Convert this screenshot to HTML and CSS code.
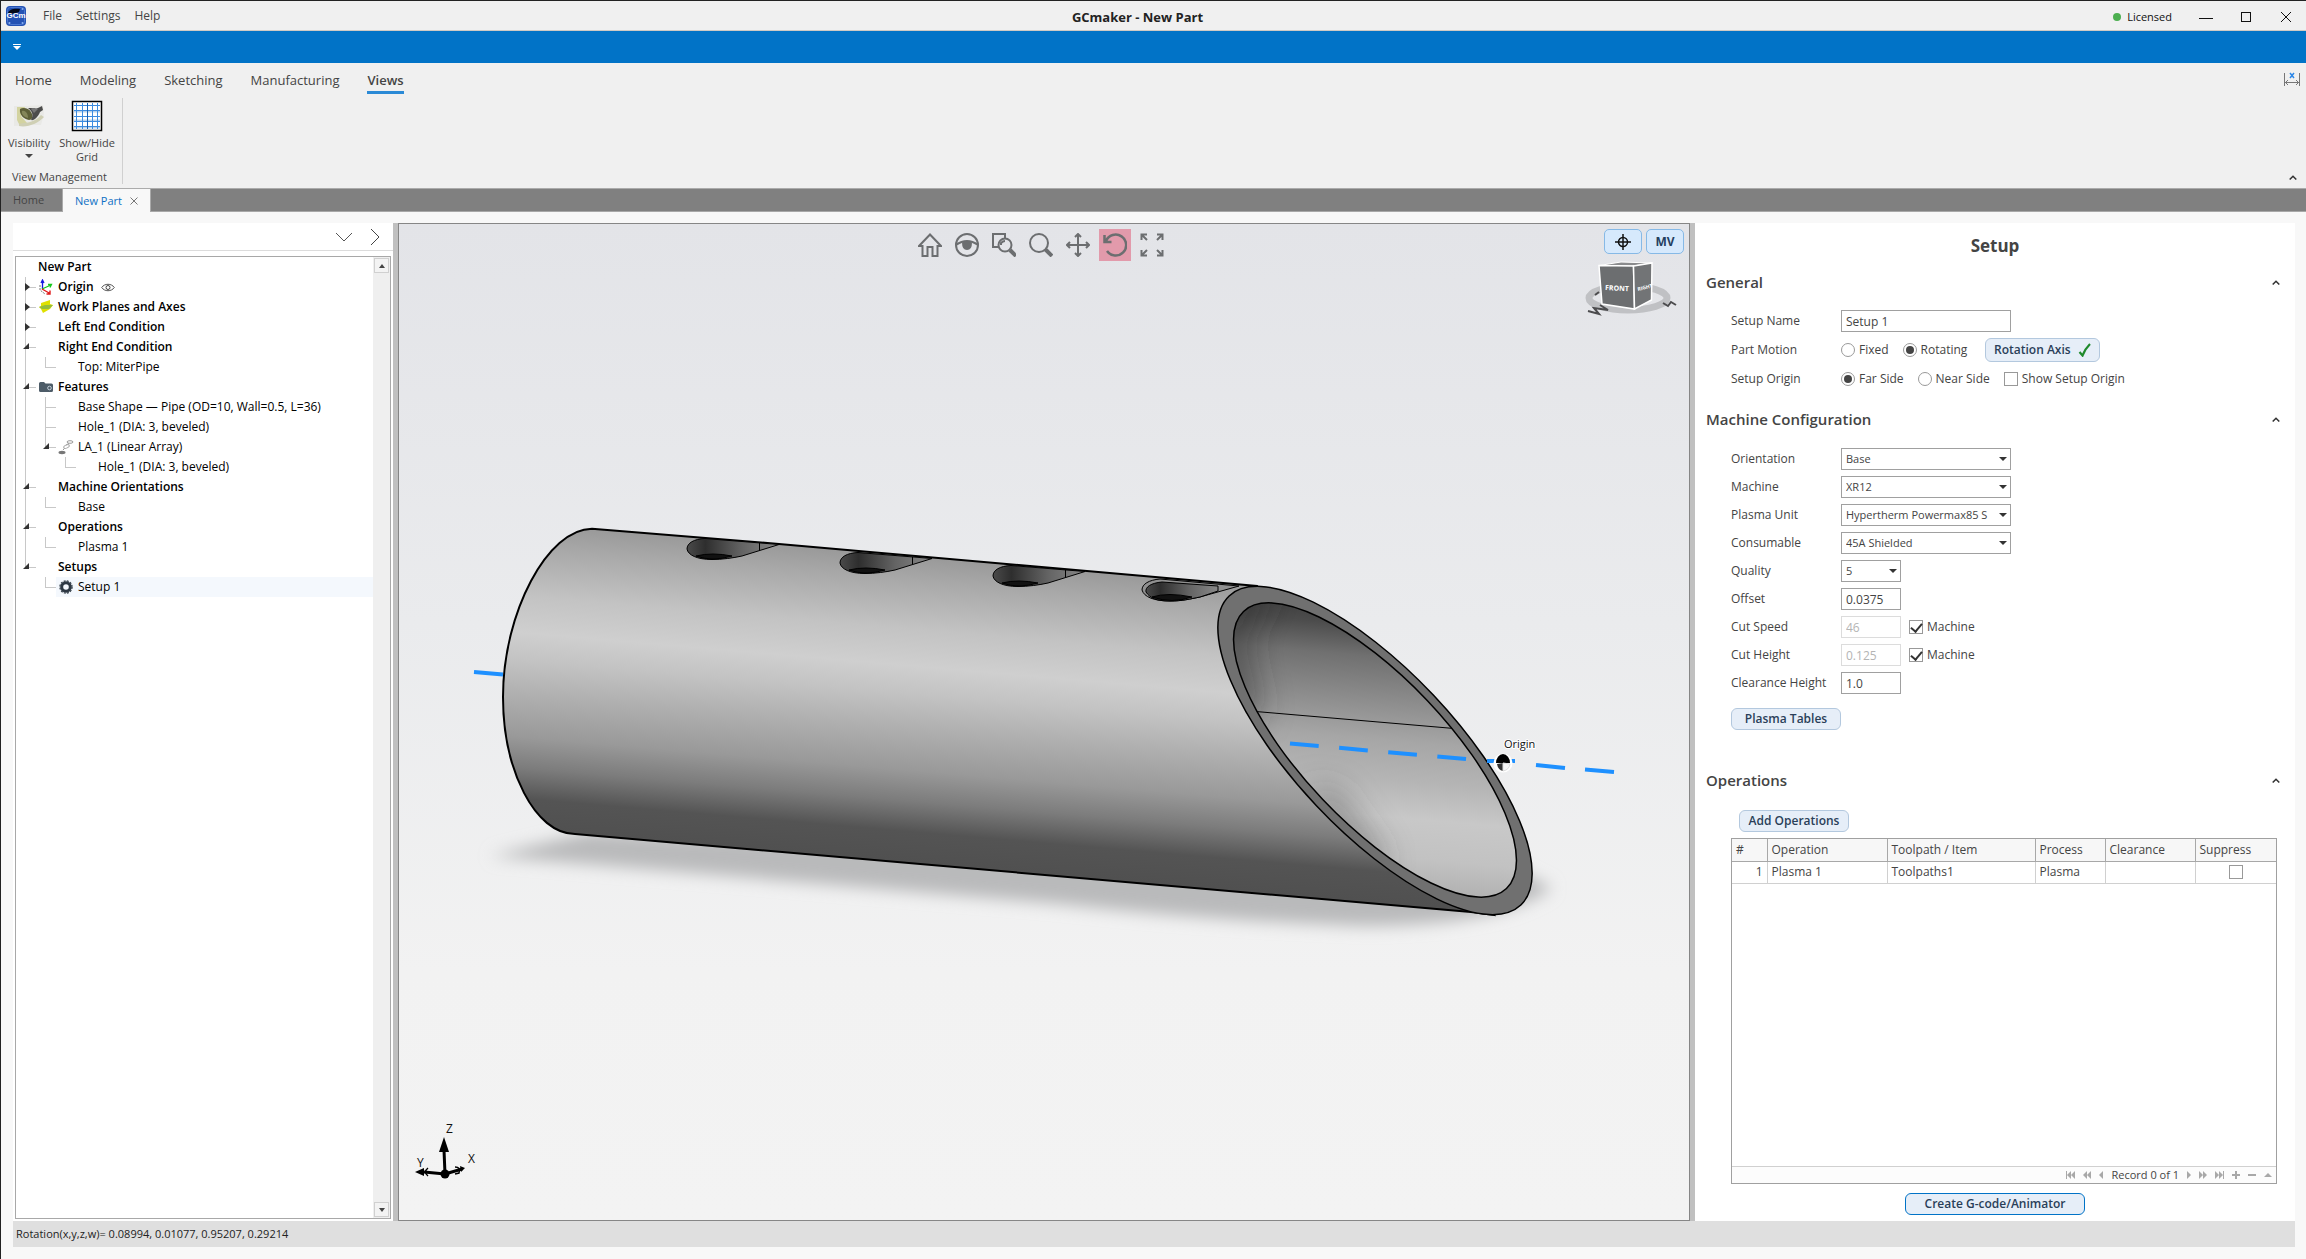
FILE: index.html
```
<!DOCTYPE html>
<html lang="en">
<head>
<meta charset="utf-8">
<title>GCmaker - New Part</title>
<link rel="stylesheet" href="styles.css">
</head>
<body>
<div class="window">
  <header class="titlebar">
    <div class="title-left">
      <svg class="app-logo" width="20" height="20" viewBox="0 0 20 20"><rect width="20" height="20" rx="4" fill="#2452b4"/><rect x="1.500" y="1.500" width="17" height="17" rx="3" fill="none" stroke="#4c78d0"/><path d="M2 7C3 3 9 2 14 3L13 6L10 7L4 8Z" fill="#050a18"/><circle cx="3.500" cy="17" r="1" fill="#8ab0f0"/><circle cx="16.500" cy="17" r="1" fill="#8ab0f0"/><circle cx="16.500" cy="3" r="1" fill="#8ab0f0"/><text x="10" y="12" text-anchor="middle" class="logo-text">GCm</text></svg>
      <nav class="menu"><button>File</button><button>Settings</button><button>Help</button></nav>
    </div>
    <h1 class="app-title">GCmaker - New Part</h1>
    <div class="title-right">
      <span class="license"><i class="dot"></i>Licensed</span>
      <button class="win-btn" aria-label="Minimize"><svg width="14" height="14" viewBox="0 0 14 14"><path d="M0 8.500H14" stroke="#111"/></svg></button>
      <button class="win-btn" aria-label="Maximize"><svg width="14" height="14" viewBox="0 0 14 14"><rect x="2.500" y="2.500" width="9" height="9" fill="none" stroke="#111"/></svg></button>
      <button class="win-btn" aria-label="Close"><svg width="14" height="14" viewBox="0 0 14 14"><path d="M2 2L12 12M12 2L2 12" stroke="#111"/></svg></button>
    </div>
  </header>
  <div class="quickbar"><button aria-label="Customize toolbar"><svg width="8" height="6" viewBox="0 0 8 6"><path d="M0 0H8V1H0ZM0 2H8L4 6Z" fill="#fff"/></svg></button></div>
  <section class="ribbon">
    <nav class="ribbon-tabs">
      <button>Home</button><button>Modeling</button><button>Sketching</button><button>Manufacturing</button><button class="active">Views</button>
      <span class="spacer"></span>
      <svg class="measure" width="16" height="14" viewBox="0 0 16 14"><path d="M.5 1V14M15.500 1V14M1 10.500H15M4 8L1.500 10.500L4 13M12 8L14.500 10.500L12 13" fill="none" stroke="#777"/><path d="M6 1L10 6M10 1L6 6" stroke="#2a86e8" stroke-width="1.500"/></svg>
    </nav>
    <div class="ribbon-body">
      <div class="group">
        <div class="group-items">
          <button class="tool tool-vis"><svg width="32" height="32" viewBox="0 0 32 32"><path d="M1 6H14L30 5L31 14L28 25L16 25L1 26Z" fill="#e9e9e6"/><path d="M4 7H12L8 16L14 23L7 26L4 20Z" fill="#d3d3a0"/><path d="M6 24C12 22 20 24 28 15L31 17C26 23 14 28 6 26Z" fill="#cfcfb4"/><path d="M7 9C10 7 16 8 18 12C21 17 19 20 16 20C11 19 6 15 7 9Z" fill="#5d5f38"/><path d="M9 11C12 10 15 13 15 18C11 17 8 14 9 11Z" fill="#84865a"/><path d="M15 8C20 8 24 9 25 8L29 6L30 10L27 12C25 17 21 21 18 20C21 15 19 11 15 8Z" fill="#4c4c4c"/><path d="M18 9L25 9L21 13Z" fill="#777"/></svg><span>Visibility</span><svg width="8" height="5" viewBox="0 0 8 5"><path d="M0 0H8L4 4Z" fill="#444"/></svg></button>
          <button class="tool tool-grid"><svg width="32" height="32" viewBox="0 0 32 32"><rect x="1.500" y="1.500" width="29" height="29" fill="#fff" stroke="#000" stroke-width="1.500"/><path d="M3 11.500H29M3 27.500H29M3 20.500H29" stroke="#b9d3ec" stroke-width="2"/><path d="M5.500 3V29M11.500 3V29M21.500 3V29M26.500 3V29M3 5.500H29M3 10.500H29M3 16.500H29M3 21.500H29M3 26.500H29" stroke="#3d8ce0"/><path d="M16.500 3V29" stroke="#1760b4"/></svg><span>Show/Hide<br>Grid</span></button>
        </div>
        <div class="group-name">View Management</div>
      </div>
      <button class="collapse" aria-label="Collapse ribbon"><svg width="8" height="5" viewBox="0 0 8 5"><path d="M.7 4.500L4 1.200L7.300 4.500" fill="none" stroke="#333" stroke-width="1.500"/></svg></button>
    </div>
  </section>
  <nav class="doc-tabs"><button class="doc">Home</button><button class="doc current">New Part<svg width="8" height="8" viewBox="0 0 8 8"><path d="M.5.5L7.500 7.500M7.500.5L.5 7.500" stroke="#777"/></svg></button></nav>

  <main class="work">
    <aside class="explorer">
      <div class="explorer-head">
        <button aria-label="Expand"><svg width="18" height="10" viewBox="0 0 18 10"><path d="M1 1L9 9L17 1" fill="none" stroke="#555"/></svg></button>
        <button aria-label="Next"><svg width="10" height="18" viewBox="0 0 10 18"><path d="M1 1L9 9L1 17" fill="none" stroke="#444"/></svg></button>
      </div>
      <div class="tree-box">
        <ul class="tree">
          <li class="b"><i class="g"></i><span>New Part</span></li>
          <li class="b"><i class="g v h shut"></i><i class="slot"><svg width="16" height="16" viewBox="0 0 16 16"><path d="M4.500 10V2M3 4L4.500 1L6 4" fill="none" stroke="#1818e0" stroke-width="1.300"/><path d="M4 10L13 6M10 5.500L13.500 5.500L12 8.500" fill="none" stroke="#16c81c" stroke-width="1.300"/><path d="M4 10L12 14.500M12 11.500V15H8.500" fill="none" stroke="#e01818" stroke-width="1.400"/><path d="M2 6V11L7 15" fill="none" stroke="#777" stroke-dasharray="2 1"/></svg></i><span>Origin</span><svg class="eye" width="14" height="9" viewBox="0 0 14 9"><path d="M.7 4.500C3.500.2 10.500.2 13.300 4.500C10.500 8.800 3.500 8.800.7 4.500Z" fill="none" stroke="#555"/><circle cx="7" cy="4.500" r="2" fill="none" stroke="#444"/></svg></li>
          <li class="b"><i class="g v h shut"></i><i class="slot"><svg width="16" height="14" viewBox="0 0 16 14"><path d="M3 3L12 0V4L15 5L12 9L5 13L3 9L1 7L3 6Z" fill="#dfe000"/><path d="M1 7L7 5L15 5L11 9L4 9Z" fill="#94bd3c"/></svg></i><span>Work Planes and Axes</span></li>
          <li class="b"><i class="g v h shut"></i><i class="slot"></i><span>Left End Condition</span></li>
          <li class="b"><i class="g v h open"></i><i class="slot"></i><span>Right End Condition</span></li>
          <li><i class="g v"></i><i class="g end h"></i><i class="slot"></i><span>Top: MiterPipe</span></li>
          <li class="b"><i class="g v h open"></i><i class="slot"><svg width="16" height="12" viewBox="0 0 16 12"><path d="M1 2.500Q1 1 2.500 1H6L7.500 2.500H13.500Q15 2.500 15 4V9.500Q15 11 13.500 11H2.500Q1 11 1 9.500Z" fill="#4d5c68"/><circle cx="11.500" cy="7" r="1.800" fill="#4d5c68" stroke="#c5d0da"/></svg></i><span>Features</span></li>
          <li><i class="g v"></i><i class="g v h"></i><i class="slot"></i><span>Base Shape — Pipe (OD=10, Wall=0.5, L=36)</span></li>
          <li><i class="g v"></i><i class="g v h"></i><i class="slot"></i><span>Hole_1 (DIA: 3, beveled)</span></li>
          <li><i class="g v"></i><i class="g end h open"></i><i class="slot"><svg width="16" height="16" viewBox="0 0 16 16"><ellipse cx="12" cy="3" rx="3" ry="1.300" fill="none" stroke="#999"/><path d="M11 4.500L8 6M7 9L5 11" stroke="#999"/><ellipse cx="8.500" cy="7.500" rx="3" ry="1.500" fill="none" stroke="#aaa" transform="rotate(-25 8.500 7.500)"/><ellipse cx="4" cy="13.500" rx="3.500" ry="1.700" fill="#777"/></svg></i><span>LA_1 (Linear Array)</span></li>
          <li><i class="g v"></i><i class="g"></i><i class="g end h"></i><i class="slot"></i><span>Hole_1 (DIA: 3, beveled)</span></li>
          <li class="b"><i class="g v h open"></i><i class="slot"></i><span>Machine Orientations</span></li>
          <li><i class="g v"></i><i class="g end h"></i><i class="slot"></i><span>Base</span></li>
          <li class="b"><i class="g v h open"></i><i class="slot"></i><span>Operations</span></li>
          <li><i class="g v"></i><i class="g end h"></i><i class="slot"></i><span>Plasma 1</span></li>
          <li class="b"><i class="g end h open"></i><i class="slot"></i><span>Setups</span></li>
          <li><i class="g"></i><i class="g end h"></i><div class="picked"><i class="slot"><svg width="14" height="14" viewBox="0 0 14 14"><circle cx="7" cy="7" r="4.300" fill="none" stroke="#2d3843" stroke-width="3"/><circle cx="7" cy="7" r="6.100" fill="none" stroke="#2d3843" stroke-width="1.200" stroke-dasharray="2 1.200"/></svg></i><span>Setup 1</span></div></li>
        </ul>
        <div class="scroll"><button aria-label="Scroll up"><svg width="6" height="4" viewBox="0 0 6 4"><path d="M0 4L3 0L6 4Z" fill="#444"/></svg></button><button aria-label="Scroll down"><svg width="6" height="4" viewBox="0 0 6 4"><path d="M0 0L3 4L6 0Z" fill="#444"/></svg></button></div>
      </div>
    </aside>
    <div class="splitter"></div>

    <section class="viewport">
      <svg class="scene" viewBox="399 224 1290 996">
        <defs>
          <linearGradient id="body" gradientUnits="userSpaceOnUse" x1="592" y1="528" x2="566" y2="833">
            <stop offset="0" stop-color="#999"/><stop offset=".08" stop-color="#a8a8a8"/><stop offset=".24" stop-color="#c3c3c3"/><stop offset=".36" stop-color="#cfcfcf"/><stop offset=".45" stop-color="#c3c3c3"/><stop offset=".56" stop-color="#b0b0b0"/><stop offset=".7" stop-color="#999"/><stop offset=".8" stop-color="#7c7c7c"/><stop offset=".9" stop-color="#545454"/><stop offset="1" stop-color="#505050"/>
          </linearGradient>
          <linearGradient id="bore" gradientUnits="userSpaceOnUse" x1="1385" y1="596" x2="1359" y2="900">
            <stop offset="0" stop-color="#383838"/><stop offset=".1" stop-color="#4c4c4c"/><stop offset=".2" stop-color="#707070"/><stop offset=".35" stop-color="#8e8e8e"/><stop offset=".47" stop-color="#a6a6a6"/><stop offset=".6" stop-color="#b5b5b5"/><stop offset=".72" stop-color="#c8c8c8"/><stop offset=".85" stop-color="#c2c2c2"/><stop offset="1" stop-color="#ababab"/>
          </linearGradient>
          <linearGradient id="hole" x1="0" x2="1" y1="0" y2="0"><stop offset="0" stop-color="#4a4a4a"/><stop offset=".2" stop-color="#2e2e2e"/><stop offset=".6" stop-color="#646464"/><stop offset="1" stop-color="#888"/></linearGradient>
          <filter id="soft" x="-10%" y="-40%" width="120%" height="180%"><feGaussianBlur stdDeviation="8"/></filter>
          <filter id="shade" x="-50%" y="-50%" width="200%" height="200%"><feGaussianBlur stdDeviation="16"/></filter>
          <clipPath id="boreclip"><ellipse cx="1375" cy="750" rx="191" ry="72" transform="rotate(46.500 1375 750)"/></clipPath>
        </defs>
        <path d="M490 856L590 832L1500 862L1552 888Q1500 926 1360 926Q1200 920 1060 904Z" fill="#b9babb" filter="url(#soft)"/>
        <path d="M474 672L503 674.500" stroke="#1e90ff" stroke-width="4"/>
        <path d="M592 528.700C548 528.700 503 612 503 697C503 770 535 834 575 834L1471 912L1494 915L1375 750L1257 586L779 544Z" fill="url(#body)" stroke="#000" stroke-width="2"/>
        <g stroke="#000" stroke-width="1">
          <g id="port"><path d="M705 538.500C694 539 687 543 687 549C688 555 697 559.500 712 559.500C722 559.500 733 558 742 556L779 544.500Z" fill="url(#hole)"/><path d="M759.500 543V550.500" fill="none"/><path d="M696 556Q712 552 732 556Q712 562 696 556Z" fill="#111"/></g>
          <use href="#port" x="153" y="14"/>
          <use href="#port" x="306" y="27"/>
          <path d="M1160 579C1149 580 1142 584 1142 590C1144 597 1154 601 1170 601C1182 601 1190 599 1200 597L1239 586Z" fill="#909090"/>
          <path d="M1162 582C1151 583 1145 587 1146 592C1150 598 1156 601 1170 601C1182 601 1190 599 1200 597L1218 591V586Z" fill="url(#hole)"/>
          <path d="M1152 597Q1168 592 1192 597Q1172 604 1152 597Z" fill="#111"/>
        </g>
        <ellipse cx="1375" cy="750.500" rx="212.500" ry="80.500" transform="rotate(46.660 1375 750.500)" fill="#707070" stroke="#000" stroke-width="1.500"/>
        <g clip-path="url(#boreclip)">
          <rect x="1220" y="590" width="310" height="320" fill="url(#bore)"/>
          <path d="M1215 580H1275L1245 640L1262 715L1225 720Z" fill="#333" fill-opacity=".6" filter="url(#shade)"/>
          <path d="M1300 790L1335 790L1385 860L1370 880Z" fill="#444" fill-opacity=".5" filter="url(#shade)"/>
          <path d="M1250 711L1460 729" stroke="#000"/>
        </g>
        <ellipse cx="1375" cy="750" rx="191" ry="72" transform="rotate(46.500 1375 750)" fill="none" stroke="#000" stroke-width="1.500"/>
        <path d="M1290 743.500L1467 759.200" stroke="#1e90ff" stroke-width="4" stroke-dasharray="28.800 20.500"/>
        <path d="M1487 761H1515M1536 765L1565 768M1585 769.500L1614 772" stroke="#1e90ff" stroke-width="4"/>
        <circle cx="1503" cy="763" r="9.500" fill="#fff"/><path d="M1496 763A7 9 0 0 1 1510 763Z" fill="#000"/><path d="M1497 764Q1498 770 1503 771V763Z" fill="#333"/><path d="M1503 763V771Q1509 770 1510 764Z" fill="#f6f6f6" stroke="#ddd"/>
        <text x="1504" y="748" class="scene-text halo">Origin</text>
        <g stroke="#000" stroke-width="3"><path d="M445 1174L444 1150M445 1174L424 1172M445 1174L462 1169"/></g>
        <path d="M444 1137L449 1152H439ZM415 1172L424 1168V1176ZM465 1168L460 1166L461 1172Z"/><circle cx="445" cy="1174" r="4.500"/>
        <path d="M428 1168Q423 1172 428 1176M455 1167Q461 1167 459 1173L455 1174" fill="none" stroke="#000" stroke-width="1.500"/>
        <text x="446" y="1133" class="scene-text">Z</text><text x="417" y="1167" class="scene-text">Y</text><text x="468" y="1163" class="scene-text">X</text>
      </svg>
      <div class="view-tools">
        <button aria-label="Home view"><svg viewBox="0 0 24 24"><path d="M1 13L12 1.500L23 13H19.500V23H14.500V14H9.500V23H4.500V13Z"/></svg></button>
        <button aria-label="Look"><svg viewBox="0 0 24 24"><circle cx="12" cy="12" r="11"/><path d="M1 12Q12 4 23 12" /><path d="M7 9.500Q12 6.500 17 9.500Q17 17 12 17Q7 17 7 9.500Z" class="solid"/></svg></button>
        <button aria-label="Zoom window"><svg viewBox="0 0 24 24"><path d="M13 5V1H1V14H6"/><circle cx="13" cy="12" r="6.500"/><path d="M18 17L24 23" class="thick"/><path d="M9 12V10Q11 8 13 8"/></svg></button>
        <button aria-label="Zoom"><svg viewBox="0 0 24 24"><circle cx="10" cy="10" r="9"/><path d="M16.500 16.500L23 23" class="thick"/></svg></button>
        <button aria-label="Pan"><svg viewBox="0 0 24 24"><path d="M12 1V23M1 12H23M9 4L12 1L15 4M9 20L12 23L15 20M4 9L1 12L4 15M20 9L23 12L20 15"/></svg></button>
        <button aria-label="Rotate" class="on"><svg viewBox="0 0 24 24"><path d="M3 8A10.500 10.500 0 1 1 4 18M1.500 2V9H8.500" stroke-width="2.500"/></svg></button>
        <button aria-label="Fit"><svg viewBox="0 0 24 24"><path d="M1.500 7V1.500H7M2 2L7 7M17 1.500H22.500V7M22 2L17 7M1.500 17V22.500H7M2 22L7 17M17 22.500H22.500V17M22 22L17 17"/></svg></button>
      </div>
      <div class="corner">
        <div class="corner-btns">
          <button aria-label="Target"><svg width="16" height="16" viewBox="0 0 16 16"><circle cx="8" cy="8" r="4.500" fill="none" stroke="#111" stroke-width="1.500"/><path d="M8 0V16M0 8H16" stroke="#111" stroke-width="1.500"/></svg></button>
          <button>MV</button>
        </div>
        <svg class="cube" width="100" height="62" viewBox="1586 260 100 62"><ellipse cx="1631" cy="298" rx="39" ry="12" fill="none" stroke="#c0c1c4" stroke-width="7"/><path d="M1602 265.500L1624 262L1655 263L1636.500 266Z" fill="#8a8b8d" stroke="#fff"/><path d="M1602 265.500L1636.500 266L1637.500 309L1605 304Z" fill="#6c6e70" stroke="#fff" stroke-width="1.500"/><path d="M1636.500 266L1655 263L1654.500 300L1637.500 309Z" fill="#727476" stroke="#fff" stroke-width="1.500"/><text x="1608" y="290" class="cube-text" transform="rotate(3 1608 290)">FRONT</text><text x="1641" y="291" class="cube-text small" transform="rotate(-14 1641 291)">RIGHT</text><path d="M1591 311L1602 314L1597 308L1611 310L1603 305M1666 303L1671 306L1674 302L1679 305" fill="none" stroke="#4c4c4e" stroke-width="2"/><path d="M1598 295L1602 292" stroke="#4c4c4e" stroke-width="2"/></svg>
      </div>
    </section>
    <div class="splitter"></div>

    <aside class="setup">
      <h2>Setup</h2>
      <section class="first">
        <h3>General<svg width="8" height="5" viewBox="0 0 8 5"><path d="M.7 4.500L4 1.200L7.300 4.500" fill="none" stroke="#333" stroke-width="1.500"/></svg></h3>
        <div class="form general">
          <label class="name" for="sname">Setup Name</label><div class="cell"><input id="sname" class="text wide" type="text" value="Setup 1"></div>
          <span class="name">Part Motion</span><div class="cell opts"><label><input type="radio" name="motion">Fixed</label><label><input type="radio" name="motion" checked>Rotating</label><button class="btn axis">Rotation Axis<svg width="14" height="14" viewBox="0 0 14 14"><path d="M1.500 9L4.500 12.500Q7 6 12 1" fill="none" stroke="#1f8a2c" stroke-width="2.200"/></svg></button></div>
          <span class="name">Setup Origin</span><div class="cell opts"><label><input type="radio" name="origin" checked>Far Side</label><label><input type="radio" name="origin">Near Side</label><label><input type="checkbox">Show Setup Origin</label></div>
        </div>
      </section>
      <section>
        <h3>Machine Configuration<svg width="8" height="5" viewBox="0 0 8 5"><path d="M.7 4.500L4 1.200L7.300 4.500" fill="none" stroke="#333" stroke-width="1.500"/></svg></h3>
        <div class="form machine">
          <label class="name" for="ori">Orientation</label><div class="cell"><div class="pick wide"><select id="ori"><option>Base</option></select></div></div>
          <label class="name" for="mac">Machine</label><div class="cell"><div class="pick wide"><select id="mac"><option>XR12</option></select></div></div>
          <label class="name" for="unit">Plasma Unit</label><div class="cell"><div class="pick wide"><select id="unit"><option>Hypertherm Powermax85 S</option></select></div></div>
          <label class="name" for="con">Consumable</label><div class="cell"><div class="pick wide"><select id="con"><option>45A Shielded</option></select></div></div>
          <label class="name" for="qua">Quality</label><div class="cell"><div class="pick"><select id="qua"><option>5</option></select></div></div>
          <label class="name" for="off">Offset</label><div class="cell"><input id="off" class="text" type="text" value="0.0375"></div>
          <label class="name" for="spd">Cut Speed</label><div class="cell"><input id="spd" class="text" type="text" value="46" disabled><label><input type="checkbox" checked>Machine</label></div>
          <label class="name" for="hgt">Cut Height</label><div class="cell"><input id="hgt" class="text" type="text" value="0.125" disabled><label><input type="checkbox" checked>Machine</label></div>
          <label class="name" for="clr">Clearance Height</label><div class="cell"><input id="clr" class="text" type="text" value="1.0"></div>
        </div>
        <button class="btn tables">Plasma Tables</button>
      </section>
      <section class="ops">
        <h3>Operations<svg width="8" height="5" viewBox="0 0 8 5"><path d="M.7 4.500L4 1.200L7.300 4.500" fill="none" stroke="#333" stroke-width="1.500"/></svg></h3>
        <button class="btn add">Add Operations</button>
        <div class="grid-box">
          <table>
            <colgroup><col class="c1"><col class="c2"><col class="c3"><col class="c4"><col class="c5"><col></colgroup>
            <thead><tr><th>#</th><th>Operation</th><th>Toolpath / Item</th><th>Process</th><th>Clearance</th><th>Suppress</th></tr></thead>
            <tbody><tr><td class="num">1</td><td>Plasma 1</td><td>Toolpaths1</td><td>Plasma</td><td></td><td class="mid"><input type="checkbox" aria-label="Suppress"></td></tr></tbody>
          </table>
          <div class="pager">
            <svg width="9" height="8" viewBox="0 0 9 8"><path d="M0 0H1V8H0ZM5 0V8L1 4ZM9 0V8L5 4Z"/></svg>
            <svg width="8" height="8" viewBox="0 0 8 8"><path d="M4 0V8L0 4ZM8 0V8L4 4Z"/></svg>
            <svg width="4" height="8" viewBox="0 0 4 8"><path d="M4 0V8L0 4Z"/></svg>
            <span>Record 0 of 1</span>
            <svg width="4" height="8" viewBox="0 0 4 8"><path d="M0 0V8L4 4Z"/></svg>
            <svg width="8" height="8" viewBox="0 0 8 8"><path d="M0 0V8L4 4ZM4 0V8L8 4Z"/></svg>
            <svg width="9" height="8" viewBox="0 0 9 8"><path d="M8 0H9V8H8ZM0 0V8L4 4ZM4 0V8L8 4Z"/></svg>
            <svg width="8" height="8" viewBox="0 0 8 8"><path d="M3 0H5V3H8V5H5V8H3V5H0V3H3Z"/></svg>
            <svg width="8" height="8" viewBox="0 0 8 8"><path d="M0 3H8V5H0Z"/></svg>
            <svg width="8" height="8" viewBox="0 0 8 8"><path d="M0 6L4 2L8 6Z"/></svg>
          </div>
        </div>
        <button class="btn create">Create G-code/Animator</button>
      </section>
    </aside>
  </main>
  <footer class="status">Rotation(x,y,z,w)= 0.08994, 0.01077, 0.95207, 0.29214</footer>
</div>
</body>
</html>
```
FILE: styles.css
```
* { box-sizing: border-box; }
body { margin: 0; background: #f8f8f8; color: #444; font: 12px/16px "Open Sans", "Noto Sans", sans-serif; }
button, input, select { font: inherit; color: inherit; }
button { background: none; border: 0; padding: 0; }
h1, h2, h3, ul { margin: 0; padding: 0; font-weight: 600; }
svg { display: block; flex: none; }

.window { display: flex; flex-direction: column; min-height: 100vh; border: solid #222; border-width: 1px 0 0 1px; }

.titlebar { display: grid; grid-template-columns: 1fr auto 1fr; align-items: center; height: 30px; background: #f0f0f0; border-bottom: 1px solid #cfcac5; }
.title-left, .title-right, .menu { display: flex; align-items: center; }
.title-left { padding-left: 5px; gap: 17px; }
.logo-text { font: bold 8px "Liberation Sans", sans-serif; fill: #fff; }
.menu { gap: 14px; }
.app-title { font-size: 13px; line-height: 20px; color: #222; font-weight: 700; padding: 2px 32px 0 0; }
.title-right { justify-content: flex-end; }
.license { display: flex; align-items: center; gap: 6px; margin-right: 14px; padding-top: 2px; font-size: 11px; color: #111; }
.dot { width: 8px; height: 8px; border-radius: 50%; background: #4caf50; }
.win-btn { width: 40px; height: 28px; padding-top: 2px; display: grid; place-items: center; }

.quickbar { height: 32px; background: #0173c7; display: flex; align-items: center; padding-left: 12px; }

.ribbon { background: #f0f0f0; border-bottom: 1px solid #ababab; }
.ribbon-tabs { display: flex; height: 31px; padding: 2px 6px 0 14px; gap: 28px; align-items: flex-start; font-size: 13px; }
.ribbon-tabs button { height: 29px; padding-top: 3px; border-bottom: 3px solid transparent; }
.ribbon-tabs .active { font-weight: 600; border-color: #2b8ad6; }
.spacer { flex: 1; }
.measure { margin-top: 7px; }
.ribbon-body { display: flex; justify-content: space-between; align-items: flex-end; height: 94px; padding: 4px 6px 4px 3px; }
.group { height: 86px; border-right: 1px solid #d0d0d0; width: 119px; display: flex; flex-direction: column; justify-content: space-between; }
.group-items { display: flex; gap: 3px; padding-top: 2px; }
.tool { display: flex; flex-direction: column; align-items: center; line-height: 14px; gap: 4px; font-size: 11px; }
.tool-vis { width: 50px; }
.tool-grid { width: 60px; }
.group-name { padding: 0 8px; font-size: 11px; line-height: 14px; }
.collapse { padding: 4px 3px 4px; }

.doc-tabs { display: flex; height: 23px; background: #808080; border-bottom: 1px solid #a8a8a8; }
.doc { width: 62px; padding-left: 12px; text-align: left; color: #444; border-right: 1px solid #aaa; height: 22px; font-size: 11px; }
.doc.current { width: 88px; height: 23px; background: #f8f8f8; color: #0f70c4; display: flex; align-items: center; gap: 8px; }

.work { flex: 1; display: flex; margin: 11px 11px 0 12px; min-height: 990px; }
.explorer { width: 380px; background: #fff; display: flex; flex-direction: column; padding: 0 2px 2px; }
.explorer-head { display: flex; justify-content: flex-end; align-items: center; gap: 17px; height: 28px; margin: 0 -2px 5px; padding-right: 13px; border-bottom: 1px solid #dcdcdc; }
.tree-box { flex: 1; display: flex; border: 1px solid #a8a8a8; }
.tree { flex: 1; list-style: none; color: #000; font-weight: 400; }
.tree li { display: flex; align-items: center; height: 20px; white-space: nowrap; }
.tree span { padding-left: 2px; }
.tree .b { font-weight: 600; }
.g { position: relative; width: 20px; height: 20px; flex: none; }
.g.v::before, .g.end::before { content: ""; position: absolute; left: 9px; top: 0; bottom: 0; border-left: 1px solid #c8c8c8; }
.g.end::before { bottom: 10px; }
.g.h { background: linear-gradient(#c8c8c8, #c8c8c8) 9px 10px / 11px 1px no-repeat; }
.g.shut::after { content: ""; position: absolute; left: 9px; top: 6px; border: solid transparent; border-width: 4px 0 4px 5px; border-left-color: #333; }
.g.open::after { content: ""; position: absolute; left: 7px; top: 6px; border: solid transparent; border-width: 0 0 6px 6px; border-bottom-color: #333; }
.slot { width: 20px; flex: none; display: grid; place-items: center; }
.eye { margin-left: 7px; }
.picked { flex: 1; display: flex; align-items: center; height: 20px; background: #f4f8fd; }
.scroll { width: 17px; background: #efefef; display: flex; flex-direction: column; justify-content: space-between; align-items: center; padding: 1px; }
.scroll button { width: 15px; height: 15px; border: 1px solid #d0d0d0; background: #f3f3f3; display: grid; place-items: center; }

.splitter { width: 5px; background: #c0c0c0; }
.viewport { flex: 1; position: relative; border: 1px solid #868686; background: linear-gradient(#e3e4e8, #eaebed 40%, #f2f2f2 75%, #f3f3f3); overflow: hidden; }
.scene { position: absolute; width: 100%; height: 100%; }
.scene-text { font: 12px "Open Sans", sans-serif; fill: #111; }
.halo { font-size: 11px; stroke: #fff; stroke-width: 2px; paint-order: stroke; }
.view-tools { position: absolute; left: 0; right: 6px; top: 5px; display: flex; justify-content: center; gap: 5px; }
.view-tools button { width: 32px; height: 32px; display: grid; place-items: center; }
.view-tools .on { background: #e29aab; }
.view-tools svg { width: 24px; height: 24px; fill: none; stroke: #6c6e70; stroke-width: 2; }
.view-tools .solid { fill: #6c6e70; stroke: none; }
.view-tools .thick { stroke-width: 4; }
.corner { position: absolute; top: 5px; right: 5px; display: flex; flex-direction: column; align-items: flex-end; gap: 6px; }
.corner-btns { display: flex; gap: 4px; }
.corner-btns button { width: 38px; height: 25px; border: 1px solid #86b9e6; border-radius: 5px; background: #d6e9fc; color: #24405f; font-weight: 700; display: grid; place-items: center; }
.cube { margin-right: 1px; }
.cube-text { font: bold 7px "Open Sans", sans-serif; fill: #fff; }
.cube-text.small { font-size: 5px; }

.setup { width: 600px; background: #fff; display: flex; flex-direction: column; padding: 11px 18px 6px 11px; }
.setup h2 { font-size: 17px; line-height: 24px; text-align: center; margin-right: -7px; font-weight: 700; }
.setup h3 { display: flex; justify-content: space-between; align-items: center; font-size: 15px; line-height: 20px; padding-right: 15px; margin-right: -18px; }
.setup section { margin-top: 18px; }
.setup .first { margin-top: 14px; }
.form { display: grid; grid-template-columns: 110px 1fr; row-gap: 5px; margin: 17px 0 0 25px; align-items: center; }
.machine { row-gap: 6px; margin-top: 19px; }
.name { font-weight: 500; }
.cell { display: flex; align-items: center; height: 22px; gap: 8px; }
.general .cell { height: 24px; }
.cell label { display: flex; align-items: center; gap: 4px; white-space: nowrap; }
.cell.opts { gap: 14px; }
.text, .pick { width: 60px; height: 22px; border: 1px solid #a0a0a0; background: #fff; font-size: 12px; }
.text { padding: 0 4px; }
.text:disabled { border-color: #dcdcdc; color: #b4b4b4; }
.text.wide, .pick.wide { width: 170px; }
.pick { position: relative; }
.pick select { appearance: none; width: 100%; height: 20px; border: 0; padding: 0 16px 0 4px; background: none; font-size: 11px; }
.pick::after { content: ""; position: absolute; right: 3px; top: 8px; border: solid transparent; border-width: 4px 4px 0; border-top-color: #333; pointer-events: none; }
input[type=radio], input[type=checkbox] { appearance: none; flex: none; width: 14px; height: 14px; margin: 0; border: 1px solid #999; background: #fff; display: grid; place-items: center; }
input[type=radio] { border-radius: 50%; }
input[type=radio]:checked::before { content: ""; width: 8px; height: 8px; border-radius: 50%; background: #444; }
input[type=checkbox]:checked::before { content: ""; width: 5px; height: 9px; border: solid #333; border-width: 0 2px 2px 0; transform: rotate(40deg); margin-top: -2px; }
.btn { height: 22px; border: 1px solid #b3c8de; border-radius: 6px; background: #e6eef8; color: #2a3f59; font-weight: 600; display: flex; align-items: center; justify-content: center; }
.axis { width: 115px; height: 24px; gap: 7px; margin-left: 4px; }
.tables { width: 110px; margin: 14px 0 0 25px; }
.setup .ops { flex: 1; display: flex; flex-direction: column; margin-top: 40px; }
.add { width: 110px; margin: 20px 0 6px 33px; }
.grid-box { flex: 1; display: flex; flex-direction: column; justify-content: space-between; margin-left: 25px; border: 1px solid #a0a0a0; }
table { width: 100%; border-collapse: collapse; table-layout: fixed; }
th, td { text-align: left; font-weight: 400; padding: 0 4px; height: 22px; border-right: 1px solid #d0d0d0; border-bottom: 1px solid #d0d0d0; }
th { background: #f7f7f7; border-color: #a8a8a8; }
th:last-child, td:last-child { border-right: 0; }
.c1 { width: 35px; } .c2 { width: 120px; } .c3 { width: 148px; } .c4 { width: 70px; } .c5 { width: 90px; }
.num { text-align: right; }
.mid input { margin: 0 auto; }
.pager { display: flex; justify-content: flex-end; align-items: center; gap: 8px; height: 17px; padding-right: 4px; border-top: 1px solid #d0d0d0; background: #fcfcfc; font-size: 11px; }
.pager svg { fill: #a8a8a8; }
.create { width: 180px; align-self: center; margin: 9px -7px 0 0; border-color: #0173c7; }
.status { height: 26px; margin: 0 11px 12px 12px; padding-left: 3px; background: #dfdfdf; line-height: 26px; color: #222; font-size: 11px; }
```
